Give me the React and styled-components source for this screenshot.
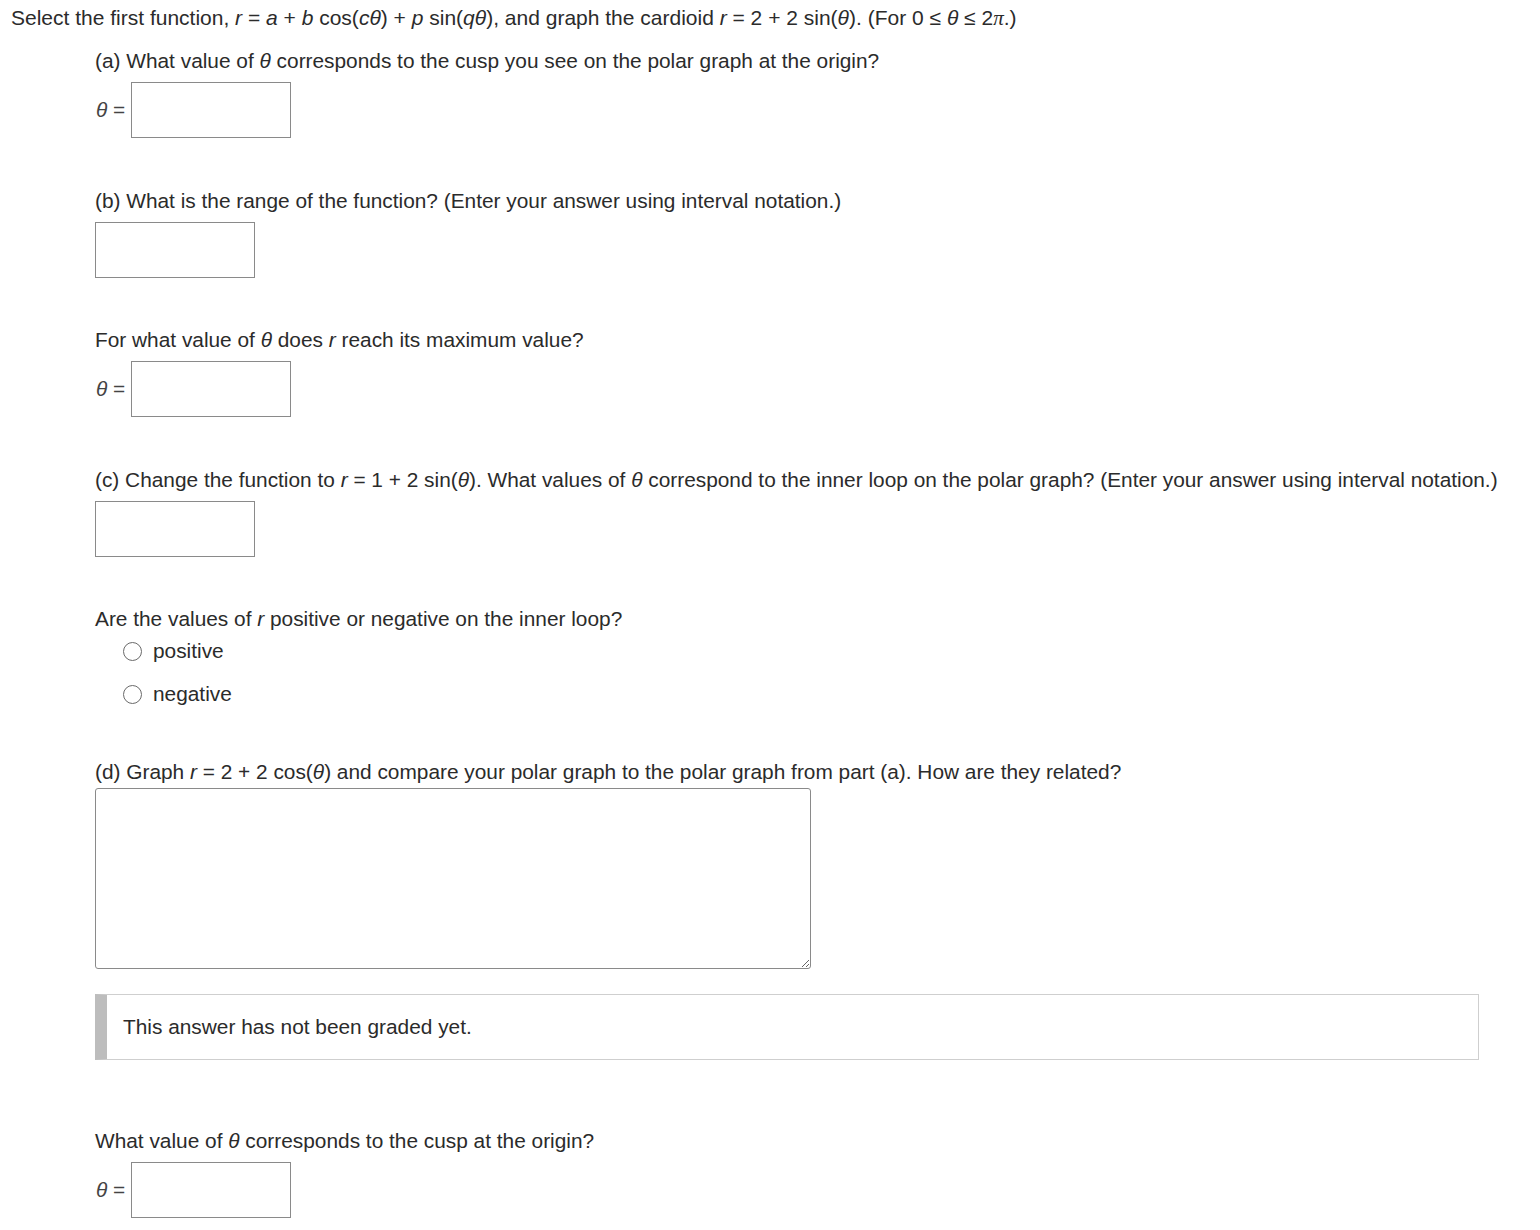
import styled, { createGlobalStyle } from 'styled-components';

const GlobalStyle = createGlobalStyle`
  body {
    margin: 0;
    background: #fff;
    font-family: "Liberation Sans", Arial, Helvetica, sans-serif;
    color: #2b2b2b;
  }
`;

const Page = styled.div`
  padding: 5px 0 40px 11px;
  font-size: 21px;
  line-height: 26px;
`;

const Intro = styled.p`
  margin: 0;
`;

const Question = styled.div`
  margin-left: 84px;
  font-size: 20.85px;
`;

const Prompt = styled.p`
  margin: ${(props) => props.top || 49.5}px 0 0;
`;

const Var = styled.i`
  font-style: italic;
`;

const Pi = styled.span`
  font-family: "Liberation Serif", "Times New Roman", serif;
  font-style: italic;
`;

const AnswerRow = styled.div`
  display: flex;
  align-items: center;
  gap: 6px;
  margin-top: 8px;
`;

const Label = styled.span`
  color: #444;
  padding-left: 1px;
`;

const TextBox = styled.input`
  box-sizing: border-box;
  width: 160px;
  height: 56px;
  border: 1px solid #8a8a8a;
  border-radius: 0;
  margin: 0;
  padding: 4px 8px;
  font: inherit;
`;

const RadioList = styled.div`
  display: flex;
  flex-direction: column;
  gap: 17px;
  margin: 6px 0 0 28px;
`;

const RadioOption = styled.label`
  display: flex;
  align-items: center;
  gap: 11px;
`;

const RadioCircle = styled.span`
  box-sizing: border-box;
  width: 19px;
  height: 19px;
  border: 1.7px solid #6a6a6a;
  border-radius: 50%;
  background: #fff;
`;

const Essay = styled.textarea`
  display: block;
  box-sizing: border-box;
  width: 716px;
  height: 181px;
  margin-top: 3px;
  border: 1px solid #8a8a8a;
  border-radius: 3px;
  font: inherit;
  padding: 6px;
`;

const GradeNote = styled.div`
  box-sizing: border-box;
  width: 1384px;
  height: 66px;
  margin-top: 25px;
  display: flex;
  align-items: center;
  border: 1px solid #cfcfcf;
  border-left: 12px solid #bdbdbd;
  padding-left: 16px;
`;

function ThetaInput() {
  return (
    <AnswerRow>
      <Label>
        <Var>θ</Var> =
      </Label>
      <TextBox type="text" />
    </AnswerRow>
  );
}

export default function App() {
  return (
    <>
      <GlobalStyle />
      <Page>
        <Intro>
          Select the first function, <Var>r</Var> = <Var>a</Var> + <Var>b</Var> cos(<Var>c</Var>
          <Var>θ</Var>) + <Var>p</Var> sin(<Var>q</Var><Var>θ</Var>), and graph the cardioid{' '}
          <Var>r</Var> = 2 + 2 sin(<Var>θ</Var>). (For 0 ≤ <Var>θ</Var> ≤ 2<Pi>π</Pi>.)
        </Intro>
        <Question>
          <Prompt top={17}>
            (a) What value of <Var>θ</Var> corresponds to the cusp you see on the polar graph at the origin?
          </Prompt>
          <ThetaInput />

          <Prompt>
            (b) What is the range of the function? (Enter your answer using interval notation.)
          </Prompt>
          <AnswerRow>
            <TextBox type="text" />
          </AnswerRow>

          <Prompt>
            For what value of <Var>θ</Var> does <Var>r</Var> reach its maximum value?
          </Prompt>
          <ThetaInput />

          <Prompt>
            (c) Change the function to <Var>r</Var> = 1 + 2 sin(<Var>θ</Var>). What values of{' '}
            <Var>θ</Var> correspond to the inner loop on the polar graph? (Enter your answer using
            interval notation.)
          </Prompt>
          <AnswerRow>
            <TextBox type="text" />
          </AnswerRow>

          <Prompt>
            Are the values of <Var>r</Var> positive or negative on the inner loop?
          </Prompt>
          <RadioList>
            <RadioOption>
              <RadioCircle />
              positive
            </RadioOption>
            <RadioOption>
              <RadioCircle />
              negative
            </RadioOption>
          </RadioList>

          <Prompt top={52}>
            (d) Graph <Var>r</Var> = 2 + 2 cos(<Var>θ</Var>) and compare your polar graph to the polar
            graph from part (a). How are they related?
          </Prompt>
          <Essay />

          <GradeNote>This answer has not been graded yet.</GradeNote>

          <Prompt top={68}>
            What value of <Var>θ</Var> corresponds to the cusp at the origin?
          </Prompt>
          <ThetaInput />
        </Question>
      </Page>
    </>
  );
}
